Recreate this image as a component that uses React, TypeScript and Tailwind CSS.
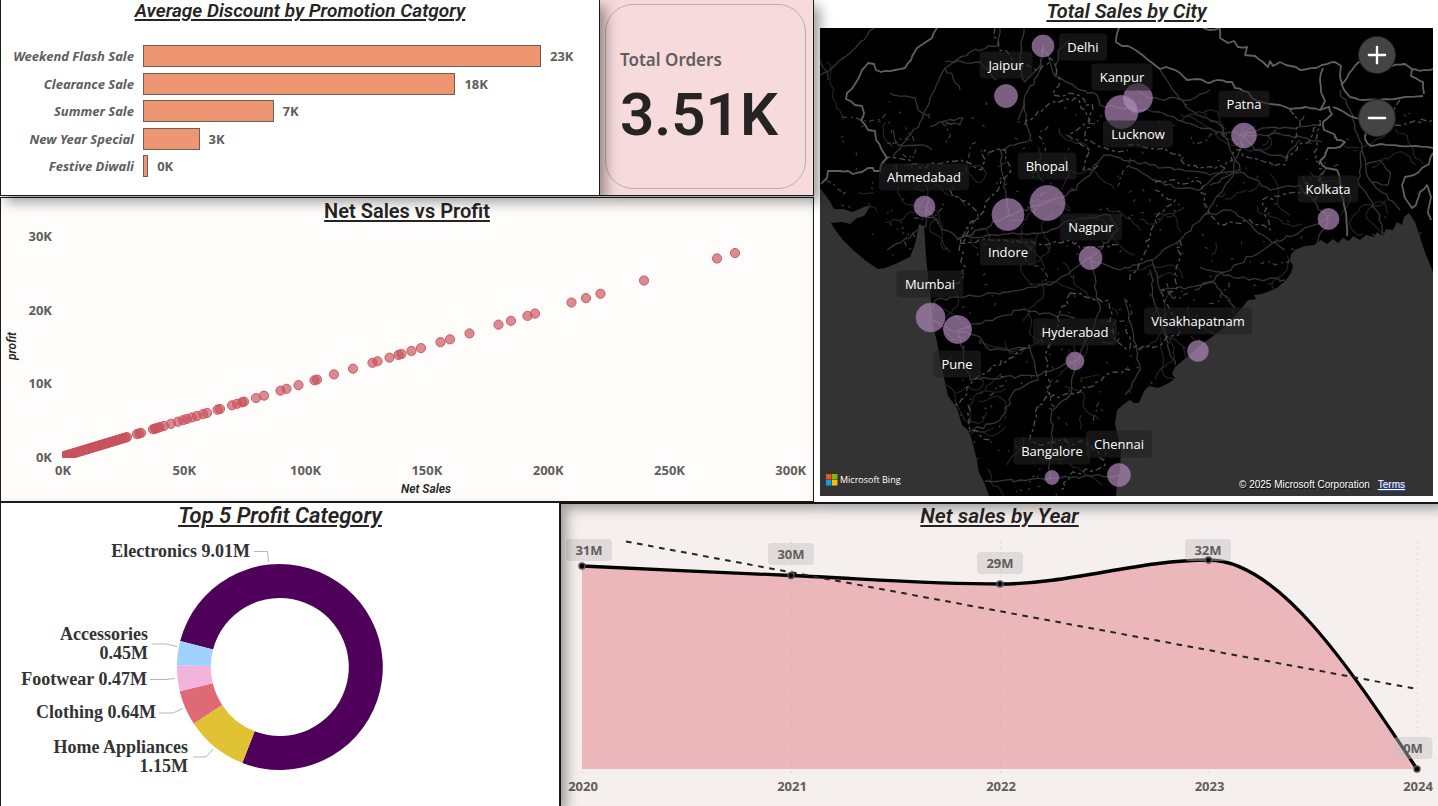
import type { ReactNode } from "react";
import { Minus, Plus } from "lucide-react";

const TITLE =
  "text-center font-['Roboto'] leading-[22px] font-semibold text-[#252423] underline decoration-2 underline-offset-2";
const AXIS = "fill-[#605e5c] font-['Noto_Sans'] text-[13px] font-bold";

function Panel({ className, children }: { className: string; children: ReactNode }) {
  return (
    <section className={`relative shadow-[6px_6px_12px_rgba(0,0,0,0.38)] ${className}`}>
      {children}
    </section>
  );
}

/* ---------- Discount bars ---------- */

const discounts = [
  { name: "Weekend Flash Sale", label: "23K", share: 100 },
  { name: "Clearance Sale", label: "18K", share: 78.5 },
  { name: "Summer Sale", label: "7K", share: 32.8 },
  { name: "New Year Special", label: "3K", share: 14.2 },
  { name: "Festive Diwali", label: "0K", share: 1.3 },
];

function DiscountChart() {
  return (
    <Panel className="z-40 flex flex-col border-x border-b border-[#1c1c1c] bg-white">
      <h2 className={`${TITLE} text-[19px] italic`}>Average Discount by Promotion Catgory</h2>
      <ul className="flex flex-1 flex-col justify-between pt-[23px] pr-[58px] pb-[18px] font-['Noto_Sans'] text-[13px] leading-[22px] font-bold text-[#605e5c]">
        {discounts.map((d) => (
          <li key={d.name} className="flex items-center gap-[9px]">
            <span className="w-[133px] shrink-0 text-right whitespace-nowrap italic">{d.name}</span>
            <div className="flex flex-1 items-center gap-[9px]">
              <div
                className="h-[22px] shrink-0 border border-[#6b5f58] bg-[#ee9672]"
                style={{ width: `${d.share}%` }}
              />
              <span>{d.label}</span>
            </div>
          </li>
        ))}
      </ul>
    </Panel>
  );
}

/* ---------- Orders card ---------- */

function OrdersCard() {
  return (
    <Panel className="z-30 flex border-r border-b border-[#1c1c1c] bg-[#f7dbdc] pt-1 pr-[7px] pb-[6px] pl-[5px]">
      <div className="flex flex-1 flex-col justify-center gap-2 rounded-[28px] border border-[#b9aeae] pt-[5px] pl-[14px]">
        <p className="font-['Noto_Sans'] text-[17px] leading-6 font-semibold text-[#605e5c]">Total Orders</p>
        <p className="font-['Roboto'] text-[60px] leading-[70px] font-semibold text-[#252423]">3.51K</p>
      </div>
    </Panel>
  );
}

/* ---------- Scatter ---------- */

const sparse = [
  137, 139, 141, 153, 155, 156, 158, 160, 164, 171, 178, 183, 187, 192, 197, 203, 207, 217.5, 220, 232, 237, 242,
  244, 256, 264, 280.5, 286.5, 298.5, 314.5, 317, 334, 353, 372.5, 377.5, 389.5, 398.5, 401.5, 411.5, 421, 440.5,
  450, 469.5, 498.5, 511, 527.5, 535, 571.5, 586, 600.5, 644, 717, 735,
];
const dense = Array.from({ length: 46 }, (_, i) => 64 + i * 1.4);
const dots = [...dense, ...sparse];

function ScatterChart() {
  return (
    <Panel className="z-10 mt-px border border-[#1c1c1c] bg-[#fffdfc] pt-[2px]">
      <h2 className={`${TITLE} text-[20px]`}>Net Sales vs Profit</h2>
      <svg viewBox="1 222 812 279" className="block w-full">
        <defs>
          <clipPath id="plot">
            <rect x="62" y="225" width="740" height="233" />
          </clipPath>
        </defs>
        <g className={AXIS}>
          {["30K", "20K", "10K", "0K"].map((t, i) => (
            <text key={t} x="52" y={241 + i * 73.6} textAnchor="end">
              {t}
            </text>
          ))}
          {["0K", "50K", "100K", "150K", "200K", "250K", "300K"].map((t, i) => (
            <text key={t} x={63 + i * 121.3} y="475" textAnchor="middle">
              {t}
            </text>
          ))}
        </g>
        <g className="fill-[#252423] font-['Roboto'] text-[12px] font-semibold italic">
          <text x="426" y="493" textAnchor="middle">
            Net Sales
          </text>
          <text transform="translate(16 346) rotate(-90)" textAnchor="middle">
            profit
          </text>
        </g>
        <g clipPath="url(#plot)" fill="#c8535d" fillOpacity="0.68" stroke="#c8535d" strokeOpacity="0.9">
          {dots.map((x) => (
            <circle key={x} cx={x} cy={456.5 - (x - 63) * 0.3028} r="4.6" />
          ))}
        </g>
      </svg>
    </Panel>
  );
}

/* ---------- Map ---------- */

const land =
  "M820 28H1433V272L1429 262L1424 250L1421 240L1415 222L1409 213L1404 217L1402 225L1397 222L1393 230L1386 229L1383 236L1377 232L1374 237L1366 235L1360 240L1353 236L1349 241L1343 238L1338 243L1333 239L1327 244L1321 240L1315 245L1305 246L1297 249L1291 254L1290 260L1293 266L1291 273L1286 280L1277 288L1262 294L1254 295L1256 299L1248 300L1241 309L1233 318L1225 327L1212 337L1199 346L1186 358L1175 367L1172 374L1175 378L1169 383L1158 388L1149 386L1144 391L1139 403L1134 403L1130 400L1124 404L1117 410L1115 424L1118 437L1121 450L1120 470L1117 484L1116 496H989L984 482L979 473L977 461L972 440L968 430L962 425L957 408L948 396L945 382L940 360L937 342L933 325L931 300L928 277L926 256L925 240L924 226L919 224L916 240L914 247L910 257L895 264L885 268L878 269L866 261L852 249L843 240L836 231L831 223L842 222L850 224L857 218L864 216L871 205L862 208L852 212L843 209L834 209L829 200L820 188Z";

/** Small deterministic generator, so that the roads are the same on every load. */
function seeded(seed: number) {
  let s = seed;
  return () => {
    s = (s * 16807) % 2147483647;
    return s / 2147483647;
  };
}

/** Breaks each straight leg of an absolute M/L path into short legs that stray a little. */
function roughen(d: string, stray: number, seed: number) {
  const rnd = seeded(seed);
  return d
    .split("M")
    .filter(Boolean)
    .map((part) => {
      const points = part.split("L").map((p) => p.trim().split(" ").map(Number));
      let out = `M${points[0][0]} ${points[0][1]}`;
      for (let i = 1; i < points.length; i++) {
        const [x0, y0] = points[i - 1];
        const [x1, y1] = points[i];
        const legs = Math.max(1, Math.round(Math.hypot(x1 - x0, y1 - y0) / 5));
        for (let k = 1; k <= legs; k++) {
          const off = k === legs ? 0 : stray;
          const x = x0 + ((x1 - x0) * k) / legs + (rnd() - 0.5) * off;
          const y = y0 + ((y1 - y0) * k) / legs + (rnd() - 0.5) * off;
          out += `L${x.toFixed(1)} ${y.toFixed(1)}`;
        }
      }
      return out;
    })
    .join("");
}

const borders = [
  "M937 28L932 38L926 42L917 48L911 60L905 68L895 70L881 72L876 70L874 64L868 63L862 70L855 84L847 93L846 99L855 105L862 106L864 113L861 120L868 130L875 131L876 140L887 158L881 165L880 171L874 171L873 168L868 168L862 172L853 174L848 171L840 171L828 171L827 178L821 184",
  "M1119 28L1116 42L1122 46L1128 46L1141 54L1151 62L1160 69L1166 67L1180 73L1187 80L1197 79L1210 83L1217 80L1232 82L1235 88L1248 92L1252 98L1265 103L1280 105L1290 109L1306 107L1320 110L1330 107",
  "M1203 28L1209 30L1220 28L1220 38L1228 43L1234 41L1238 47L1247 47L1245 55L1255 56L1263 62L1268 67L1270 61L1273 66L1280 62L1286 65L1296 67L1300 70L1316 68L1322 65L1335 62L1341 66L1340 77L1343 88L1350 97L1364 100L1400 98L1423 96",
  "M1323 68L1320 79L1321 92L1325 101L1320 110M1341 85L1347 78L1352 70L1359 62L1369 58L1392 66L1405 64L1412 69L1411 76L1423 82L1424 94M1412 69L1420 71L1433 69",
  "M1329 106L1332 114L1323 122L1324 130L1334 134L1337 140L1345 142L1340 147L1328 148L1325 156L1320 161L1326 168L1337 170L1340 180L1342 196L1346 213L1347 236M1333 107L1344 112L1350 116L1361 119L1367 128L1365 139L1371 146L1381 144L1400 146L1416 146L1433 148",
  "M1433 153L1429 164L1422 168L1414 175L1405 177L1402 185L1405 198L1412 208L1416 205L1420 192L1427 185L1431 197L1428 213L1431 220",
].map((d, i) => roughen(d, 1.6, 11 + i));

const highways = [
  "M875 28L864 40L850 53L838 62L827 72L820 75M820 60L827 72L828 80M1024 28L1020 60L1025 82L1040 66L1043 46M1043 46L1038 75L1025 95L1018 120M1000 28L999 45L970 52L945 68L930 98L920 122L893 158",
  "M945 62L980 62L997 80M890 93L915 98L918 110L930 118M930 127L945 121L963 118L960 125L945 122M893 130L898 145L920 145L932 150M960 90L953 78L945 68",
  "M1043 46L1055 76L1080 90L1097 95L1100 105L1120 108L1160 112L1200 128L1244 135L1280 134L1322 142M1055 76L1058 50L1070 40M1160 70L1170 85L1190 110L1220 125L1240 170L1210 185",
  "M926 206L940 226L958 240L1008 216L1047 203L1076 190L1104 155L1150 165L1210 175L1240 172M1008 216L1000 150L1030 140L1024 100M887 250L926 226L928 198",
  "M957 238L1048 232L1070 220L1110 215L1118 230L1090 258L1050 285L1008 292L935 300L931 317M1090 258L1100 310L1078 360L1040 375L970 380L958 330L1020 310L1075 318",
  "M931 317L950 330L980 337L990 350L1030 348L1038 380L1015 390L1000 420L968 432M1075 361L1070 395L1052 410L1050 478L1119 475M1052 478L1020 480L985 481",
  "M1244 135L1230 180L1204 215L1180 240L1152 260L1120 270L1092 260M1204 215L1230 210L1263 235L1285 250M1152 260L1160 290L1190 287L1215 283L1235 308M1328 219L1300 185L1270 190L1240 172M1328 219L1270 245L1195 290",
  "M1340 90L1350 110L1362 150L1358 180L1380 215L1383 236M1362 150L1370 180L1400 210M1328 219L1315 245M1200 267L1240 278L1285 280M1150 270L1155 305L1175 365M1125 300L1140 370L1125 395",
  "M1244 135L1262 128L1290 128L1318 125M1244 135L1255 150L1285 158L1300 140M1128 165L1165 185L1200 190L1225 168M1365 165L1380 160L1390 172L1388 185L1372 182M1128 85L1150 98L1190 100L1210 90",
].map((d, i) => roughen(d, 3.4, 31 + i));

const stateLines = [
  "M995 28L998 45L1015 65L1040 70L1050 58L1060 80L1053 95L1080 96L1093 110L1085 140L1110 150L1128 150",
  "M885 159L910 160L920 168L950 161L970 163L982 170L985 150L1005 150L1010 172L1000 185L985 205L975 220L965 230L960 245L965 275L945 290",
  "M1025 125L1050 103L1075 98L1090 120L1068 135L1090 150L1083 170L1098 165M950 190L970 205L978 215L960 243L1000 240L1045 245L1070 240L1080 248L1120 245",
  "M1128 145L1165 148L1180 155L1185 165L1225 168L1235 150L1260 160L1285 165L1298 145L1310 140L1320 120M1155 182L1200 182L1210 215L1225 225L1250 220L1270 230L1262 200L1310 190",
  "M1130 280L1145 252L1155 218L1175 200L1155 190M1180 240L1175 290L1160 290L1170 310L1180 330L1160 345L1130 348L1126 325M1070 293L1095 300L1108 300L1115 340L1130 350",
  "M1070 293L1068 305L1060 312L1055 335L1045 355L1050 395L1038 405L1035 420L1030 440L1040 445L1060 440L1090 445L1105 465L1070 475L1060 490",
  "M948 400L958 405L973 380L990 370L1010 358L1030 345M1050 398L1080 392L1105 375L1130 370M968 405L970 430L990 440",
  "M1400 100L1390 120L1370 130M1395 125L1433 120M1290 110L1300 125L1290 145M1320 120L1315 160L1325 170L1315 200",
].map((d, i) => roughen(d, 5, 91 + i));

function wander(seed: number, count: number, steps: number, stride: number, top: number) {
  const rnd = seeded(seed);
  return Array.from({ length: count }, () => {
    let x = 820 + rnd() * 613;
    let y = top + rnd() * (496 - top);
    let angle = rnd() * 6.28;
    let d = `M${x.toFixed(1)} ${y.toFixed(1)}`;
    const n = 2 + Math.floor(rnd() * steps);
    for (let i = 0; i < n; i++) {
      angle += (rnd() - 0.5) * 1.8;
      x += Math.cos(angle) * stride;
      y += Math.sin(angle) * stride;
      d += `L${x.toFixed(1)} ${y.toFixed(1)}`;
    }
    return d;
  }).join("");
}

const minorRoads = wander(71, 150, 14, 5, 120);
const districtLines = wander(1309, 55, 12, 4, 110);
const villages = wander(523, 420, 2, 1, 100);

const cities = [
  { name: "Delhi", x: 1043, y: 46, r: 11, lx: 1083, ly: 47, w: 48 },
  { name: "Jaipur", x: 1006, y: 96, r: 11.5, lx: 1006, ly: 65, w: 53 },
  { name: "Kanpur", x: 1138, y: 98, r: 14.5, lx: 1122, ly: 77, w: 61 },
  { name: "Lucknow", x: 1121.5, y: 112, r: 16.5, lx: 1138, ly: 134, w: 70 },
  { name: "Patna", x: 1244, y: 135.5, r: 12.5, lx: 1244, ly: 104, w: 51 },
  { name: "Bhopal", x: 1047.5, y: 203, r: 17.5, lx: 1047, ly: 166, w: 59 },
  { name: "Indore", x: 1008, y: 214.5, r: 16, lx: 1008, ly: 252, w: 56 },
  { name: "Ahmedabad", x: 924.5, y: 206.5, r: 10.5, lx: 924, ly: 177, w: 90 },
  { name: "Nagpur", x: 1090.5, y: 258, r: 11.5, lx: 1091, ly: 227, w: 62 },
  { name: "Kolkata", x: 1328.5, y: 219, r: 10.5, lx: 1328, ly: 189, w: 61 },
  { name: "Mumbai", x: 930.5, y: 317.5, r: 14.5, lx: 930, ly: 284, w: 67 },
  { name: "Pune", x: 957.5, y: 329.5, r: 14, lx: 957, ly: 364, w: 48 },
  { name: "Hyderabad", x: 1075, y: 361, r: 9, lx: 1075, ly: 332, w: 84 },
  { name: "Visakhapatnam", x: 1198, y: 351, r: 10.5, lx: 1198, ly: 321, w: 108 },
  { name: "Bangalore", x: 1052, y: 477.5, r: 7, lx: 1052, ly: 451, w: 77 },
  { name: "Chennai", x: 1119, y: 475, r: 11.5, lx: 1119, ly: 444, w: 66 },
];

function ZoomButton({ label, children }: { label: string; children: ReactNode }) {
  return (
    <button
      type="button"
      aria-label={label}
      className="flex size-9 items-center justify-center rounded-full bg-[#444] text-white ring-1 ring-[#222]"
    >
      {children}
    </button>
  );
}

function CityMap() {
  return (
    <Panel className="z-20 flex flex-col bg-white pr-[5px] pb-[6px] pl-[6px]">
      <h2 className={`${TITLE} mb-[6px] text-[20px] italic`}>Total Sales by City</h2>
      <div className="relative">
        <svg viewBox="820 28 613 468" className="block w-full bg-[#333]">
          <defs>
            <clipPath id="land">
              <path d={land} />
            </clipPath>
          </defs>
          <path d={land} fill="#000" />
          <g clipPath="url(#land)" fill="none" strokeLinejoin="round">
            <path d={minorRoads} stroke="#232323" strokeWidth="1.2" />
            <path d={villages} stroke="#363636" strokeWidth="1.2" />
            <path d={districtLines} stroke="#484848" strokeWidth="1.1" strokeDasharray="5 3 2 4" />
            {highways.map((d) => (
              <path key={d} d={d} stroke="#363636" strokeWidth="1.3" />
            ))}
            {stateLines.map((d) => (
              <path key={d} d={d} stroke="#505050" strokeWidth="1.3" strokeDasharray="6 3 3 3" />
            ))}
            {borders.map((d) => (
              <path key={d} d={d} stroke="#606060" strokeWidth="1.8" />
            ))}
          </g>
          <g fill="#b48cbd" fillOpacity="0.68" stroke="#8c619b" strokeOpacity="0.7">
            {cities.map((c) => (
              <circle key={c.name} cx={c.x} cy={c.y} r={c.r} />
            ))}
          </g>
          {cities.map((c) => (
            <g key={c.name}>
              <rect x={c.lx - c.w / 2} y={c.ly - 13.5} width={c.w} height="27" rx="4" fill="#222" fillOpacity="0.6" />
              <text
                x={c.lx}
                y={c.ly + 5}
                textAnchor="middle"
                className="fill-white font-['Open_Sans'] text-[13px]"
              >
                {c.name}
              </text>
            </g>
          ))}
        </svg>
        <div className="absolute top-[9px] right-[38px] flex flex-col gap-[27px]">
          <ZoomButton label="Zoom in">
            <Plus size={28} strokeWidth={2} />
          </ZoomButton>
          <ZoomButton label="Zoom out">
            <Minus size={28} strokeWidth={2} />
          </ZoomButton>
        </div>
        <div className="absolute bottom-[10px] left-[6px] flex items-center gap-[2px] font-['Open_Sans'] text-[9px] leading-3 text-white">
          <svg viewBox="0 0 12 12" className="size-3">
            <path fill="#f25022" d="M0 0h5.5v5.5H0z" />
            <path fill="#7fba00" d="M6 0h5.5v5.5H6z" />
            <path fill="#00a4ef" d="M0 6h5.5v5.5H0z" />
            <path fill="#ffb900" d="M6 6h5.5v5.5H6z" />
          </svg>
          Microsoft Bing
        </div>
        <div className="absolute right-7 bottom-[5px] flex gap-2 font-['Liberation_Sans'] text-[10px] leading-3 text-white [text-shadow:1px_1px_1px_#000]">
          <span>© 2025 Microsoft Corporation</span>
          <a href="#terms" className="underline [text-shadow:1px_1px_1px_#1d4ed8]">
            Terms
          </a>
        </div>
      </div>
    </Panel>
  );
}

/* ---------- Donut ---------- */

const slices = [
  { value: 9.01, color: "#4f005a" },
  { value: 1.15, color: "#e1c233" },
  { value: 0.64, color: "#de6a73" },
  { value: 0.47, color: "#f2b3dc" },
  { value: 0.45, color: "#a0d1ff" },
];
const total = slices.reduce((sum, s) => sum + s.value, 0);

function polar(r: number, deg: number) {
  const a = (deg * Math.PI) / 180;
  return `${(279.8 + r * Math.sin(a)).toFixed(2)} ${(667 - r * Math.cos(a)).toFixed(2)}`;
}

let cursor = 284.6;
const arcs = slices.map((s) => {
  const from = cursor;
  const to = from + (s.value / total) * 360;
  cursor = to;
  const large = to - from > 180 ? 1 : 0;
  return {
    color: s.color,
    d: `M${polar(103, from)}A103 103 0 ${large} 1 ${polar(103, to)}L${polar(69, to)}A69 69 0 ${large} 0 ${polar(69, from)}Z`,
  };
});

const donutLabels = [
  { text: "Electronics 9.01M", x: 250, y: 557 },
  { text: "Accessories", x: 148, y: 640 },
  { text: "0.45M", x: 148, y: 659 },
  { text: "Footwear 0.47M", x: 147, y: 685 },
  { text: "Clothing 0.64M", x: 156, y: 718 },
  { text: "Home Appliances", x: 188, y: 753 },
  { text: "1.15M", x: 188, y: 772 },
];

function CategoryDonut() {
  return (
    <Panel className="z-30 border border-b-0 border-[#1c1c1c] bg-white pt-[2px]">
      <h2 className={`${TITLE} text-[22px] italic`}>Top 5 Profit Category</h2>
      <svg viewBox="1 527 558 279" className="block w-full">
        {arcs.map((a) => (
          <path key={a.color} d={a.d} fill={a.color} />
        ))}
        <path
          d="M254 551.5H267.500L268.500 562M152 644H166L177 646.500M150 679.500H165L175 678.500M159 713H173L183 708.500M193 757H206L213 749"
          fill="none"
          stroke="#b5b5b5"
        />
        <g className="fill-[#333] font-['Liberation_Serif'] text-[18px] font-bold" textAnchor="end">
          {donutLabels.map((l) => (
            <text key={l.text} x={l.x} y={l.y}>
              {l.text}
            </text>
          ))}
        </g>
      </svg>
    </Panel>
  );
}

/* ---------- Yearly area ---------- */

const curve =
  "M582 566C651.8 569.2 721.5 572.500 791.3 575.500C861 578.500 930.500 584 1000 584C1069.500 584 1139 560 1208.500 560C1278 560 1347.500 664.8 1417 769";

const years = [
  { year: "2020", x: 582, y: 566, label: "31M", lx: 589, ly: 550, w: 46 },
  { year: "2021", x: 791, y: 575.5, label: "30M", lx: 791, ly: 554, w: 46 },
  { year: "2022", x: 1000, y: 584, label: "29M", lx: 1000, ly: 563, w: 46 },
  { year: "2023", x: 1208.5, y: 560, label: "32M", lx: 1208, ly: 550, w: 46 },
  { year: "2024", x: 1417, y: 769, label: "0M", lx: 1413, ly: 748, w: 39 },
];

function YearChart() {
  return (
    <section className="relative z-0 border-t-2 border-l border-[#1c1c1c] bg-[#f5f0ee] pt-px">
      <h2 className={`${TITLE} text-[21px] italic`}>Net sales by Year</h2>
      <svg viewBox="561 527 877 279" className="block w-full">
        <path d={`${curve}H582Z`} fill="#ecb7bb" />
        {years.map((p) => (
          <path
            key={p.year}
            d={`M${p.x + 0.5} 542V774`}
            stroke="#b9a9a7"
            strokeOpacity="0.7"
            strokeDasharray="1 4.6"
          />
        ))}
        <path d={curve} fill="none" stroke="#000" strokeWidth="3.3" />
        <path d="M626 541.500L1417 689" fill="none" stroke="#252423" strokeWidth="2" strokeDasharray="5.6 5.6" />
        {years.map((p) => (
          <g key={p.year}>
            <rect
              x={p.lx - p.w / 2}
              y={p.ly - 11}
              width={p.w}
              height="22"
              rx="4"
              fill="#c8c2c0"
              fillOpacity="0.45"
            />
            <circle cx={p.x} cy={p.y} r="3" fill="#000" stroke="#555" strokeWidth="1.4" />
            <text x={p.lx} y={p.ly + 5} textAnchor="middle" className={AXIS}>
              {p.label}
            </text>
            <text x={p.x + 1} y="791" textAnchor="middle" className={AXIS}>
              {p.year}
            </text>
          </g>
        ))}
      </svg>
    </section>
  );
}

export default function App() {
  return (
    <main className="min-h-screen overflow-hidden bg-white">
      <div className="grid grid-cols-[814fr_624fr]">
        <div className="flex flex-col">
          <div className="grid flex-1 grid-cols-[600fr_214fr]">
            <DiscountChart />
            <OrdersCard />
          </div>
          <ScatterChart />
        </div>
        <CityMap />
      </div>
      <div className="grid grid-cols-[560fr_878fr]">
        <CategoryDonut />
        <YearChart />
      </div>
    </main>
  );
}
